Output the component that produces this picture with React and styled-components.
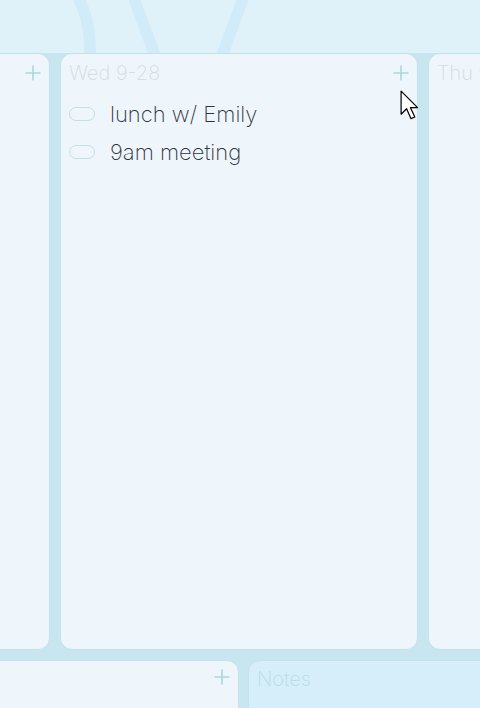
import React from 'react';
import styled, { createGlobalStyle } from 'styled-components';

const GlobalStyle = createGlobalStyle`
  html, body {
    margin: 0;
    padding: 0;
    background: #c8e6ef;
    font-family: Inter, 'Noto Sans', sans-serif;
    overflow: hidden;
  }
`;

const Page = styled.div`
  position: relative;
  width: 480px;
  height: 708px;
  overflow: hidden;
  background: #c8e6ef;
`;

const MonthBanner = styled.header`
  height: 53px;
  overflow: hidden;
  background: #dff1f9;
  display: flex;
  align-items: flex-end;
`;

const MonthWord = styled.div`
  margin-left: -274px;
  margin-bottom: -125px;
  font-size: 255px;
  line-height: 1;
  font-weight: 200;
  color: #d2ebf8;
  white-space: nowrap;
  user-select: none;
`;

const Week = styled.section`
  display: flex;
  gap: 10px;
  margin-left: -308px;
  height: 597px;
`;

const Day = styled.div`
  flex: 0 0 358px;
  box-sizing: border-box;
  background: #eef6fc;
  border: 1px solid #c3e2ec;
  border-radius: 12px;
  padding: 8px 8px 0 8px;
  display: flex;
  flex-direction: column;
`;

const DayHead = styled.div`
  display: flex;
  align-items: center;
  justify-content: space-between;
  height: 22px;
`;

const DayTitle = styled.span`
  font-size: 20px;
  font-weight: 250;
  color: #d6dadd;
`;

const AddButton = styled.button`
  border: 0;
  background: none;
  padding: 0;
  width: 16px;
  height: 16px;
  display: flex;
  align-items: center;
  justify-content: center;
  cursor: pointer;
`;

const TaskList = styled.ul`
  list-style: none;
  margin: 17px 0 0 0;
  padding: 0;
  display: flex;
  flex-direction: column;
  gap: 12px;
`;

const Task = styled.li`
  display: flex;
  align-items: center;
  gap: 15px;
  height: 26px;
`;

const Pill = styled.span`
  width: 24px;
  height: 12px;
  border: 1px solid #c5dde6;
  border-radius: 7px;
  flex: 0 0 auto;
`;

const TaskText = styled.span`
  font-size: 22px;
  font-weight: 250;
  color: #2f3340;
`;

const Bottom = styled.section`
  display: flex;
  gap: 9px;
  margin-top: 10px;
  height: 80px;
`;

const Panel = styled.div`
  flex: 0 0 ${(p) => p.$width}px;
  box-sizing: border-box;
  background: ${(p) => (p.$tint ? '#d6eefa' : '#eef6fc')};
  border: 1px solid #c3e2ec;
  border-radius: 12px;
  margin-left: ${(p) => p.$offset || 0}px;
  padding: 8px 8px 0 8px;
  display: flex;
  justify-content: ${(p) => (p.$tint ? 'flex-start' : 'flex-end')};
`;

const PanelTitle = styled.span`
  font-size: 20px;
  font-weight: 250;
  color: #b9dbe8;
  line-height: 20px;
`;

const Cursor = styled.svg`
  position: absolute;
  left: 400px;
  top: 90px;
  pointer-events: none;
`;

const Plus = () => (
  <svg width="16" height="16" viewBox="0 0 16 16">
    <path d="M8 0.5v15M0.5 8h15" stroke="#a9d9dd" strokeWidth="1.6" fill="none" />
  </svg>
);

const days = [
  { title: 'Tue 9-27', tasks: [] },
  { title: 'Wed 9-28', tasks: ['lunch w/ Emily', '9am meeting'] },
  { title: 'Thu 9-29', tasks: [] },
];

export default function App() {
  return (
    <Page>
      <GlobalStyle />
      <MonthBanner>
        <MonthWord>NOV</MonthWord>
      </MonthBanner>
      <Week>
        {days.map((d) => (
          <Day key={d.title}>
            <DayHead>
              <DayTitle>{d.title}</DayTitle>
              <AddButton aria-label="add">
                <Plus />
              </AddButton>
            </DayHead>
            <TaskList>
              {d.tasks.map((t) => (
                <Task key={t}>
                  <Pill />
                  <TaskText>{t}</TaskText>
                </Task>
              ))}
            </TaskList>
          </Day>
        ))}
      </Week>
      <Bottom>
        <Panel $width={250} $offset={-11}>
          <AddButton aria-label="add">
            <Plus />
          </AddButton>
        </Panel>
        <Panel $width={260} $tint>
          <PanelTitle>Notes</PanelTitle>
        </Panel>
      </Bottom>
      <Cursor width="22" height="32" viewBox="0 0 20 29">
        <path
          d="M1 1 L1 22 L6 17 L10 26 L13.5 24.5 L9.5 16 L16 16 Z"
          fill="#fff"
          stroke="#000"
          strokeWidth="1.1"
          strokeLinejoin="round"
        />
      </Cursor>
    </Page>
  );
}
